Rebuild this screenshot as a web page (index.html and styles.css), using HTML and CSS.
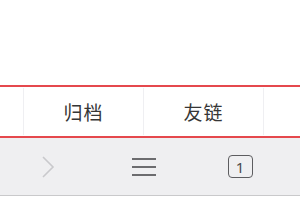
FILE: index.html
```html
<!DOCTYPE html>
<html lang="zh-CN">

<head>
    <meta charset="UTF-8">
    <meta name="viewport" content="width=device-width, initial-scale=1.0">
    <title>归档</title>
    <link rel="stylesheet" href="styles.css">
</head>

<body>
    <div class="page-top"></div>

    <nav class="site-nav">
        <ul class="nav-list">
            <li class="nav-item"></li>
            <li class="nav-item"><a href="#">归档</a></li>
            <li class="nav-item"><a href="#">友链</a></li>
            <li class="nav-item"></li>
        </ul>
    </nav>

    <div class="browser-bar">
        <button class="bar-btn" aria-label="前进">
            <svg width="14" height="24" viewBox="0 0 14 24">
                <polyline points="2,2 12,12 2,22" fill="none" stroke="#c9c9cc" stroke-width="1.6" />
            </svg>
        </button>
        <button class="bar-btn" aria-label="菜单">
            <svg width="24" height="20" viewBox="0 0 24 20">
                <line x1="0" y1="2" x2="24" y2="2" stroke="#5d5d60" stroke-width="1.8" />
                <line x1="0" y1="10" x2="24" y2="10" stroke="#5d5d60" stroke-width="1.8" />
                <line x1="0" y1="18" x2="24" y2="18" stroke="#5d5d60" stroke-width="1.8" />
            </svg>
        </button>
        <button class="bar-btn" aria-label="标签页">
            <span class="tab-count">1</span>
        </button>
    </div>
</body>

</html>
```

FILE: styles.css
```css
body {
    margin: 0;
    background: #ffffff;
    font-family: "Noto Sans CJK SC", "Noto Sans", sans-serif;
    overflow: hidden;
}

.page-top {
    height: 85px;
}

.site-nav {
    border-top: 2px solid #e5484d;
    border-bottom: 2px solid #e5484d;
    background: #ffffff;
    overflow: hidden;
}

.nav-list {
    display: flex;
    list-style: none;
    margin: 0 0 0 -96px;
    padding: 0;
    height: 49px;
}

.nav-item {
    flex: 0 0 120px;
    box-sizing: border-box;
    border-right: 1px solid #efeff2;
    margin: 1px 0;
    display: flex;
    align-items: center;
    justify-content: center;
}

.nav-item a {
    color: #363636;
    font-size: 19px;
    text-decoration: none;
    letter-spacing: 1px;
}

.browser-bar {
    display: grid;
    grid-template-columns: repeat(3, 96px);
    height: 57px;
    background: #efeff1;
    border-bottom: 1px solid #c9c9cb;
}

.bar-btn {
    border: none;
    background: none;
    padding: 0;
    display: flex;
    align-items: center;
    justify-content: center;
}

.tab-count {
    box-sizing: border-box;
    width: 25px;
    height: 23px;
    border: 1.8px solid #5d5d60;
    border-radius: 4px;
    display: flex;
    align-items: center;
    justify-content: center;
    font-family: "Noto Sans", sans-serif;
    font-size: 15px;
    color: #4a4a4d;
}
```
